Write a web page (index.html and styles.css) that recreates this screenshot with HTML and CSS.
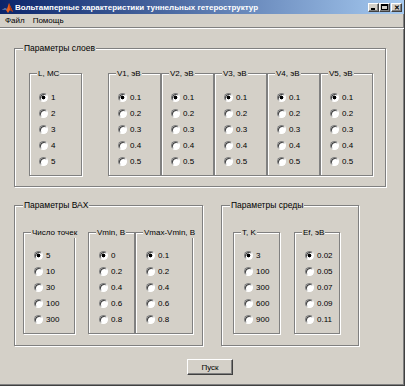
FILE: index.html
```html
<!DOCTYPE html>
<html lang="ru">
<head>
	<meta charset="UTF-8">
	<meta name="viewport" content="width=device-width, initial-scale=1.0">
	<title>Вольтамперные характеристики туннельных гетероструктур</title>
	<link rel="stylesheet" href="styles.css">
</head>
<body>
	<div class="window">
		<div class="titlebar">
			<svg class="titlebar__icon" width="11" height="11" viewBox="0 0 11 11">
				<path d="M0 8 L3 6 L5 7 L7 1 L11 10 L8 8 L6 11 L4 8 Z" fill="#e8601c"/>
				<path d="M0 8 L3 6 L5 7 L4 8 Z" fill="#3a6fb8"/>
				<path d="M7 1 L11 10 L8 8 Z" fill="#a83410"/>
			</svg>
			<span class="titlebar__text">Вольтамперные характеристики туннельных гетероструктур</span>
			<div class="titlebar__controls">
				<span class="ctl ctl--min"><i></i></span>
				<span class="ctl ctl--max"><i></i></span>
				<span class="ctl ctl--close">✕</span>
			</div>
		</div>

		<div class="menubar">
			<span class="menubar__item">Файл</span>
			<span class="menubar__item">Помощь</span>
		</div>

		<div class="figure">
			<div class="panel panel--layers">
				<span class="panel__title">Параметры слоев</span>
				<div class="group group--l" data-name="l" data-values="1,2,3,4,5">L, МС</div>
				<div class="group-row">
					<div class="group" data-name="v1" data-values="0.1,0.2,0.3,0.4,0.5">V1, эВ</div>
					<div class="group" data-name="v2" data-values="0.1,0.2,0.3,0.4,0.5">V2, эВ</div>
					<div class="group" data-name="v3" data-values="0.1,0.2,0.3,0.4,0.5">V3, эВ</div>
					<div class="group" data-name="v4" data-values="0.1,0.2,0.3,0.4,0.5">V4, эВ</div>
					<div class="group" data-name="v5" data-values="0.1,0.2,0.3,0.4,0.5">V5, эВ</div>
				</div>
			</div>

			<div class="bottom-row">
				<div class="panel panel--iv">
					<span class="panel__title">Параметры ВАХ</span>
					<div class="group group--points" data-name="n" data-values="5,10,30,100,300">Число точек</div>
					<div class="group-row">
						<div class="group group--vmin" data-name="vmin" data-values="0,0.2,0.4,0.6,0.8">Vmin, В</div>
						<div class="group group--vrange" data-name="vr" data-values="0.1,0.2,0.4,0.6,0.8">Vmax-Vmin, В</div>
					</div>
				</div>

				<div class="panel panel--env">
					<span class="panel__title">Параметры среды</span>
					<div class="group group--t" data-name="t" data-values="3,100,300,600,900">T, K</div>
					<div class="group group--ef" data-name="ef" data-values="0.02,0.05,0.07,0.09,0.11">Ef, эВ</div>
				</div>
			</div>

			<div class="actions">
				<button class="btn">Пуск</button>
			</div>
		</div>
	</div>

	<script>
		const renderGroup = group => {
			const title = group.textContent
			const values = group.dataset.values.split(",")
			group.innerHTML = `<span class="group__title">${title}</span>`
			values.forEach((value, i) => {
				const row = document.createElement("label")
				row.className = "radio"
				row.innerHTML = `
					<input type="radio" name="${group.dataset.name}" ${i === 0 ? "checked" : ""}>
					<span>${value}</span>
				`
				group.appendChild(row)
			})
		}

		document.querySelectorAll(".group[data-values]").forEach(renderGroup)
	</script>
</body>
</html>
```

FILE: styles.css
```css
html, body {
	margin: 0;
	padding: 0;
}
body {
	font-family: "Liberation Sans", Arial, sans-serif;
	font-size: 8px;
	color: #000;
	background: #d4d0c8;
}
.window {
	width: 405px;
	height: 386px;
	box-sizing: border-box;
	background: #d4d0c8;
	border-right: 1px solid #404040;
	border-bottom: 1px solid #404040;
	box-shadow: inset -1px -1px 0 #808080;
	overflow: hidden;
}

.titlebar {
	height: 14px;
	display: flex;
	align-items: center;
	padding-left: 2px;
	background: linear-gradient(to right, #0a246a, #a6caf0);
	color: #fff;
}
.titlebar__icon {
	margin-right: 2px;
}
.titlebar__text {
	font-weight: bold;
	font-size: 8px;
	white-space: nowrap;
}
.titlebar__controls {
	margin-left: auto;
	margin-right: 2px;
	display: flex;
}
.ctl {
	width: 11px;
	height: 9px;
	box-sizing: border-box;
	background: #d4d0c8;
	border: 1px solid;
	border-color: #fff #404040 #404040 #fff;
	box-shadow: inset -1px -1px 0 #808080;
	position: relative;
	color: #000;
	font-size: 7px;
	font-weight: bold;
	line-height: 7px;
	text-align: center;
}
.ctl--close {
	margin-left: 1px;
}
.ctl--min i {
	position: absolute;
	left: 2px;
	bottom: 1px;
	width: 4px;
	height: 2px;
	background: #000;
}
.ctl--max i {
	position: absolute;
	left: 1px;
	top: 0;
	width: 5px;
	border: 1px solid #000;
	border-top-width: 2px;
	height: 3px;
}

.menubar {
	height: 13px;
	display: flex;
	align-items: center;
	gap: 8px;
	padding-left: 5px;
	border-bottom: 1px solid #808080;
	box-shadow: 0 1px 0 #fff;
}

.figure {
	padding: 20px 0 0 14px;
}

.panel {
	position: relative;
	box-sizing: border-box;
	border: 1px solid #808080;
	box-shadow: 1px 1px 0 #fff, inset 1px 1px 0 #fff;
	display: flex;
}
.panel__title {
	position: absolute;
	top: -6px;
	left: 8px;
	padding: 0 1px;
	font-size: 8.5px;
	background: #d4d0c8;
	line-height: 11px;
	white-space: nowrap;
}
.panel--layers {
	width: 372px;
	height: 139px;
	padding: 24px 0 0 14px;
}
.bottom-row {
	display: flex;
	gap: 18px;
	margin-top: 18px;
}
.panel--iv {
	width: 189px;
	height: 141px;
	padding: 26px 0 0 8px;
}
.panel--env {
	width: 138px;
	height: 141px;
	padding: 26px 0 0 11px;
}

.group-row {
	display: flex;
}
.panel--layers .group-row {
	margin-left: 26px;
}
.panel--iv .group-row {
	margin-left: 13px;
}

.group {
	position: relative;
	box-sizing: border-box;
	width: 53px;
	height: 103px;
	padding: 15px 0 0 9px;
	border: 1px solid #808080;
	box-shadow: 1px 1px 0 #fff, inset 1px 1px 0 #fff;
}
.group__title {
	position: absolute;
	top: -6px;
	left: 7px;
	padding: 0 1px;
	background: #d4d0c8;
	line-height: 11px;
	white-space: nowrap;
}
.group--points {
	width: 52px;
	height: 102px;
	padding-left: 10px;
}
.group--vmin {
	width: 47px;
	height: 102px;
	padding-left: 10px;
}
.group--vrange {
	width: 58px;
	height: 102px;
	padding-left: 10px;
}
.group--t {
	width: 47px;
	height: 102px;
	padding-left: 10px;
}
.group--ef {
	width: 46px;
	height: 102px;
	padding-left: 10px;
	margin-left: 14px;
}
.panel--iv .group,
.panel--env .group {
	padding-top: 14px;
}

.radio {
	display: flex;
	align-items: center;
	gap: 3px;
	height: 16px;
}
.radio input {
	appearance: none;
	-webkit-appearance: none;
	margin: 0;
	width: 9px;
	height: 9px;
	border-radius: 50%;
	box-sizing: border-box;
	background: #fff;
	border: 1px solid;
	border-color: #808080 #fff #fff #808080;
	box-shadow: inset 1px 1px 0 #404040;
}
.radio input:checked {
	background: radial-gradient(circle, #000 0 1.6px, #fff 2.2px);
}

.actions {
	margin: 13px 0 0 173px;
}
.btn {
	width: 46px;
	height: 16px;
	padding: 0;
	font: inherit;
	background: #d4d0c8;
	border: 1px solid;
	border-color: #fff #404040 #404040 #fff;
	box-shadow: inset -1px -1px 0 #808080;
	color: #000;
}
```
